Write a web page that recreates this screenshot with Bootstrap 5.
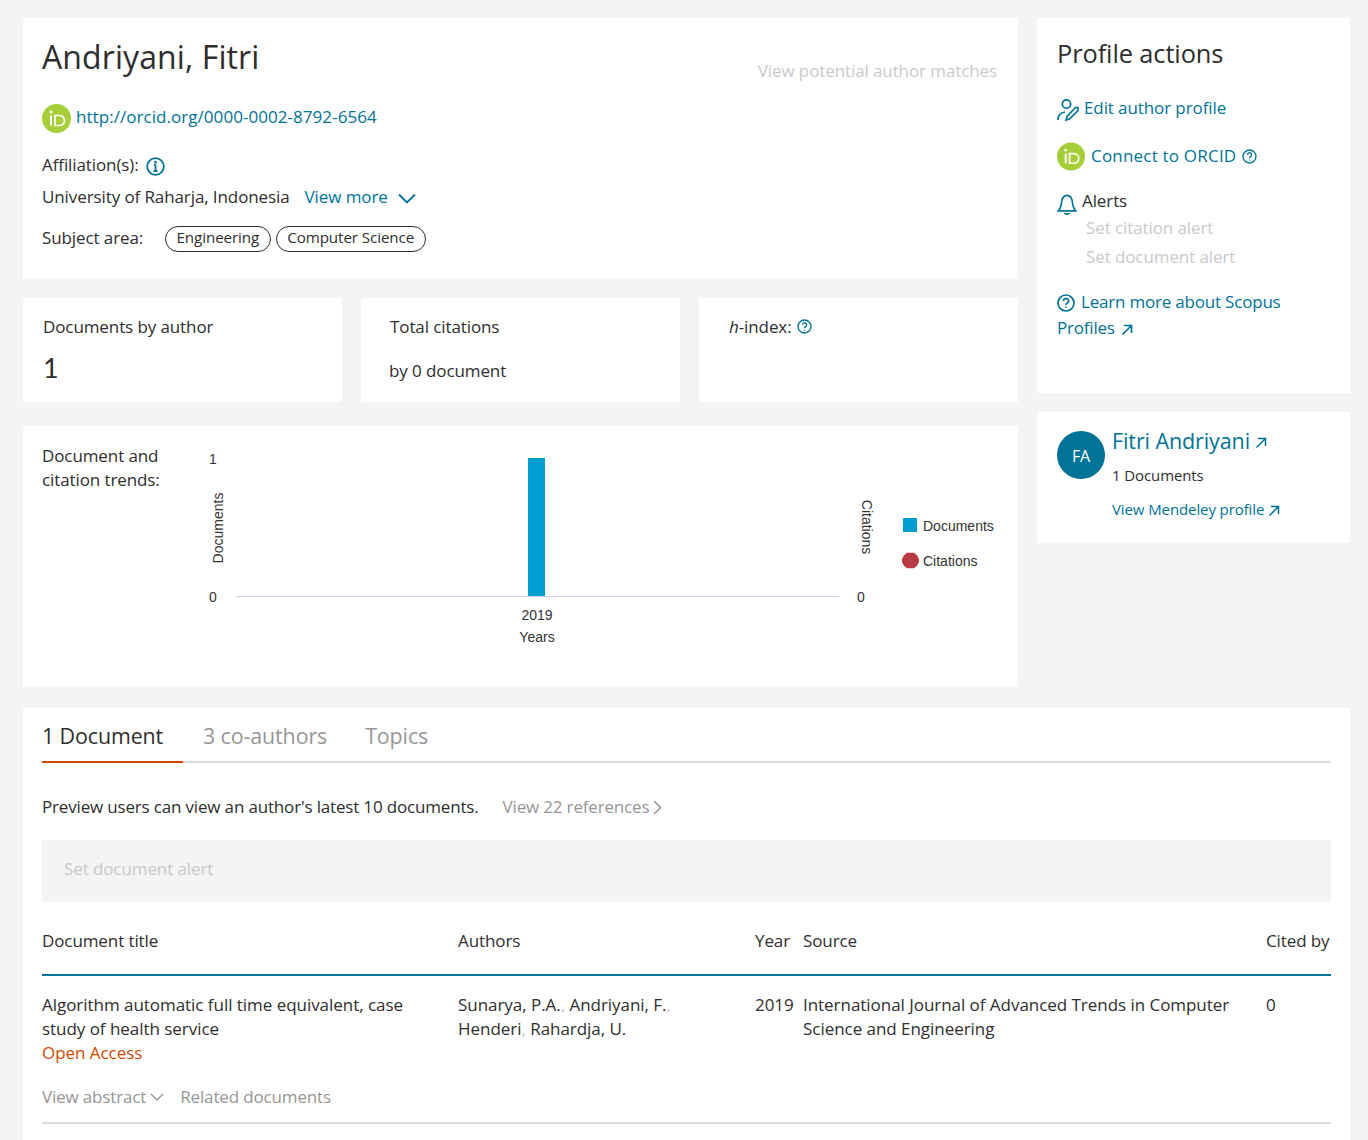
<!DOCTYPE html>
<html lang="en">
<head>
<meta charset="utf-8">
<title>Author details</title>
<link href="https://cdn.jsdelivr.net/npm/bootstrap@5.3.0/dist/css/bootstrap.min.css" rel="stylesheet">
<style>
:root{--ink:#2e2e2e;--teal:#007398;--mute:#969696;--pale:#c9c9c9;}
html,body{height:1140px;overflow:hidden}
body{background:#f4f4f4;color:var(--ink);font-family:"Open Sans","Noto Sans",sans-serif;font-size:17px;line-height:24px;padding:18px 18px 0 23px;letter-spacing:-.1px}
a{color:var(--teal);text-decoration:none}
.page-top{display:flex;gap:19px;align-items:flex-start}
.left-col{width:995px;flex:none}
.right-col{width:313px;flex:none}
.panel{background:#fff}
.author-panel{height:261px;padding:19px 20px 0 19px;position:relative}
.author-name{font-size:32px;line-height:40px;margin:0;font-weight:400;letter-spacing:.1px}
.matches{position:absolute;top:41px;right:21px;color:var(--pale)}
.orcid-line{margin-top:25px;height:30px;display:flex;align-items:center;gap:5px;letter-spacing:.05px}
.orcid-line svg{flex:none;margin-top:2px}
.aff-line{margin-top:21px;height:24px;display:flex;align-items:center;gap:7px}
.aff-line svg{margin-top:2px}
.uni-line{margin-top:8px;height:24px;display:flex;align-items:center}
.uni-line a{margin-left:15px;display:flex;align-items:center;gap:10px}
.uni-line svg{margin-top:2px}
.subject-line{margin-top:17px;height:26px;display:flex;align-items:center}
.subject-line>span:first-child{width:123px;margin-top:-3px}
.pill{border:1px solid #2e2e2e;border-radius:13px;height:26px;line-height:21px;padding:0 10.5px;font-size:15.2px;margin-right:5px}
.stats{display:flex;gap:19px;margin-top:19px}
.stat{flex:none;width:319px;height:104px;padding:17px 20px}
.stat-two{padding-left:29px}
.stat-three{padding-left:30px;display:flex;align-items:flex-start;gap:5px}
.stat-num{font-size:27px;margin-top:15px;line-height:28px;font-family:Lato,sans-serif}
.stat-sub{margin-top:20px;margin-left:-1px}
.chart-panel{height:261px;margin-top:24px;position:relative;padding:18px 19px}
.chart-label{width:140px;line-height:24px}
.chart-svg{position:absolute;left:0;top:0}
.chart-svg text{font-family:"Liberation Sans",Arial,sans-serif;font-size:14px;fill:#333;letter-spacing:0}
.actions{height:375px;padding:15px 20px}
.actions h2{font-size:25.4px;line-height:40px;font-weight:400;margin:0}
.act-row{display:flex;align-items:center}
.act-edit{margin-top:20px;height:30px;gap:5px}
.act-edit svg{margin-top:4px}
.act-orcid{margin-top:18px;height:30px;gap:6px;letter-spacing:.2px}
.act-alert{margin-top:15px;height:30px;gap:5px}
.act-alert svg{margin-top:6px}
.off-link{color:var(--pale);margin-left:29px;height:29px;line-height:29px}
.off-link.first{margin-top:-3px}
.learn{margin-top:18px;line-height:26px;letter-spacing:-.2px}
.learn svg{vertical-align:-4px}
.learn .q-icon{margin-right:6px}
.learn .out-icon{margin-left:2px;vertical-align:-2px}
.mend{height:131px;margin-top:19px;padding:19px 20px;display:flex;gap:7px}
.avatar{width:48px;height:48px;border-radius:50%;background:var(--teal);color:#fff;display:flex;align-items:center;justify-content:center;flex:none;font-size:16px;padding-top:2px}
.mend-name{font-size:21.5px;line-height:24px;margin-top:-2px;display:block}
.mend-docs{font-size:15px;margin-top:10px;margin-bottom:10px;line-height:24px}
.mend a.small-link{font-size:15px}
.docs-panel{margin-top:21px;height:432px;padding:8px 19px;overflow:hidden}
.tab-bar{display:flex;border-bottom:2px solid #dcdcdc;height:47px}
.tab-item{font-size:21.4px;line-height:40px;color:var(--mute);margin-right:38px}
.tab-item.on{color:var(--ink);border-bottom:2px solid #d14900;height:47px;width:141px;margin-right:20px}
.preview{margin-top:32px;display:flex;height:24px;align-items:center;letter-spacing:-.17px}
.preview a{color:var(--mute);margin-left:24px;display:flex;align-items:center;gap:4px}
.alert-strip{background:#f4f4f4;margin-top:21px;height:62px;line-height:58px;padding-left:22px;color:var(--pale)}
.doc-table{table-layout:fixed;width:1289px;margin:0;--bs-table-bg:transparent;--bs-table-color:#2e2e2e}
.doc-table th{font-weight:400;border-bottom:2px solid var(--teal);height:73px;padding:6px 0 0;vertical-align:middle}
.doc-table td{border-bottom:2px solid #dcdcdc;padding:17px 0 13px;vertical-align:top;letter-spacing:-.04px}
.doc-links{color:var(--mute);margin-top:20px;display:flex;align-items:center;letter-spacing:-.15px}
.doc-links span.gap-link{margin-left:16px}
.oa{color:#d14900}
.sep{color:#c9c9c9}
</style>
</head>
<body>
<div class="page-top">
  <div class="left-col">
    <section class="panel author-panel">
      <h1 class="author-name">Andriyani, Fitri</h1>
      <div class="matches">View potential author matches</div>
      <div class="orcid-line">
        <svg width="29" height="29" viewBox="0 0 29 29"><circle cx="14.5" cy="14.5" r="14.5" fill="#a6ce39"/><rect x="8" y="11.5" width="2" height="10" fill="#fff"/><circle cx="9" cy="8" r="1.4" fill="#fff"/><path d="M13 11.5h4.5a5 5 0 0 1 0 10H13z" fill="none" stroke="#fff" stroke-width="1.7"/></svg>
        <a href="#">http://orcid.org/0000-0002-8792-6564</a>
      </div>
      <div class="aff-line">Affiliation(s):
        <svg width="19" height="19" viewBox="0 0 19 19" fill="none" stroke="#007398" stroke-width="1.8"><circle cx="9.5" cy="9.5" r="8.3"/><path d="M9.5 8v6M7.5 14h4M8 8h1.5"/><circle cx="9.5" cy="5.2" r=".6"/></svg>
      </div>
      <div class="uni-line">University of Raharja, Indonesia
        <a href="#">View more <svg width="18" height="11" viewBox="0 0 18 11" fill="none" stroke="#007398" stroke-width="1.8"><path d="M1 1.5l8 8 8-8"/></svg></a>
      </div>
      <div class="subject-line"><span>Subject area:</span><span class="pill">Engineering</span><span class="pill">Computer Science</span></div>
    </section>
    <div class="stats">
      <div class="panel stat"><div>Documents by author</div><div class="stat-num">1</div></div>
      <div class="panel stat stat-two"><div>Total citations</div><div class="stat-sub">by 0 document</div></div>
      <div class="panel stat stat-three"><span><i>h</i>-index:</span>
        <svg class="mt-1" width="15" height="15" viewBox="0 0 15 15" fill="none" stroke="#007398" stroke-width="1.4"><circle cx="7.5" cy="7.5" r="6.5"/><path d="M5.4 5.8a2.1 2.1 0 1 1 3.2 1.8c-.7.4-1.1.8-1.1 1.6"/><path d="M7.5 10.6v1"/></svg>
      </div>
    </div>
    <section class="panel chart-panel">
      <div class="chart-label">Document and citation trends:</div>
      <svg class="chart-svg" width="995" height="261" viewBox="0 0 995 261">
        <path d="M213 170.5H816" stroke="#ccd6eb" stroke-width="1"/>
        <rect x="505" y="32" width="17" height="138" fill="#009ed0"/>
        <text x="190" y="38" text-anchor="middle">1</text>
        <text x="190" y="176" text-anchor="middle">0</text>
        <text x="838" y="176" text-anchor="middle">0</text>
        <text x="514" y="194" text-anchor="middle">2019</text>
        <text x="514" y="216" text-anchor="middle">Years</text>
        <text transform="translate(200 102) rotate(-90)" text-anchor="middle">Documents</text>
        <text transform="translate(839 101) rotate(90)" text-anchor="middle">Citations</text>
        <rect x="880" y="92" width="14" height="14" fill="#009ed0"/>
        <text x="900" y="105">Documents</text>
        <path d="M884 127.2h7l3 2.5 2 3.8v3l-2 3.8-3 2.5h-7l-3-2.500-2-3.800v-3l2-3.800z" fill="#b83a45" transform="translate(0 -.5)"/>
        <text x="900" y="140">Citations</text>
      </svg>
    </section>
  </div>
  <aside class="right-col">
    <section class="panel actions">
      <h2>Profile actions</h2>
      <div class="act-row act-edit">
        <svg width="22" height="22" viewBox="0 0 22 22" fill="none" stroke="#007398" stroke-width="1.7"><circle cx="9.5" cy="5" r="4.2"/><path d="M1 21c0-4.500 2.500-7.500 7-8"/><path d="M9 21l1-3.500 8-8.500a1.800 1.800 0 0 1 3 2.500l-8.500 8.500z"/></svg>
        <a href="#">Edit author profile</a>
      </div>
      <div class="act-row act-orcid">
        <svg width="28" height="29" viewBox="0 0 29 29"><circle cx="14.5" cy="14.5" r="14.5" fill="#a6ce39"/><rect x="8" y="11.5" width="2" height="10" fill="#fff"/><circle cx="9" cy="8" r="1.4" fill="#fff"/><path d="M13 11.5h4.500a5 5 0 0 1 0 10H13z" fill="none" stroke="#fff" stroke-width="1.7"/></svg>
        <a href="#">Connect to ORCID</a>
        <svg width="15" height="15" viewBox="0 0 15 15" fill="none" stroke="#007398" stroke-width="1.4"><circle cx="7.5" cy="7.5" r="6.5"/><path d="M5.4 5.8a2.100 2.100 0 1 1 3.200 1.800c-.7.400-1.100.800-1.100 1.600"/><path d="M7.5 10.600v1"/></svg>
      </div>
      <div class="act-row act-alert">
        <svg width="20" height="21" viewBox="0 0 21 23" fill="none" stroke="#007398" stroke-width="1.8"><path d="M1 18.500h19c-3-3-3-5-3.500-9C16 4 14 1.500 10.500 1.500S5 4 4.500 9.500c-.5 4-.5 6-3.500 9z"/><path d="M7.500 21c1.500 1.300 4.500 1.300 6 0"/></svg>
        <span>Alerts</span>
      </div>
      <div class="off-link first">Set citation alert</div>
      <div class="off-link">Set document alert</div>
      <div class="learn"><svg class="q-icon" width="18" height="18" viewBox="0 0 18 18" fill="none" stroke="#007398" stroke-width="1.7"><circle cx="9" cy="9" r="8"/><path d="M6.500 7a2.500 2.500 0 1 1 3.800 2.100c-.8.500-1.300 1-1.300 2"/><path d="M9 12.500v1.300"/></svg><a href="#">Learn more about Scopus Profiles <svg class="out-icon" width="12" height="12" viewBox="0 0 12 12" fill="none" stroke="#007398" stroke-width="1.7"><path d="M1.500 10.500l9-9M3 1.500h7.500V9"/></svg></a></div>
    </section>
    <section class="panel mend">
      <div class="avatar">FA</div>
      <div>
        <a class="mend-name" href="#">Fitri Andriyani <svg width="12" height="12" viewBox="0 0 12 12" fill="none" stroke="#007398" stroke-width="1.5"><path d="M1.500 10.500l9-9M3 1.500h7.500V9"/></svg></a>
        <div class="mend-docs">1 Documents</div>
        <a class="small-link" href="#">View Mendeley profile <svg width="12" height="12" viewBox="0 0 12 12" fill="none" stroke="#007398" stroke-width="1.5"><path d="M1.500 10.500l9-9M3 1.500h7.500V9"/></svg></a>
      </div>
    </section>
  </aside>
</div>
<section class="panel docs-panel">
  <div class="tab-bar">
    <div class="tab-item on">1 Document</div>
    <div class="tab-item">3 co-authors</div>
    <div class="tab-item">Topics</div>
  </div>
  <div class="preview"><span>Preview users can view an author's latest 10 documents.</span>
    <a href="#">View 22 references <svg width="9" height="15" viewBox="0 0 9 15" fill="none" stroke="#969696" stroke-width="1.5"><path d="M1 1l6.500 6.500L1 14"/></svg></a>
  </div>
  <div class="alert-strip">Set document alert</div>
  <table class="table doc-table">
    <colgroup><col style="width:416px"><col style="width:297px"><col style="width:48px"><col style="width:463px"><col style="width:65px"></colgroup>
    <thead><tr><th>Document title</th><th>Authors</th><th>Year</th><th>Source</th><th>Cited by</th></tr></thead>
    <tbody><tr>
      <td><div class="pe-5">Algorithm automatic full time equivalent, case study of health service</div><div class="oa">Open Access</div>
        <div class="doc-links"><span>View abstract</span><svg class="ms-1" width="14" height="8" viewBox="0 0 14 8" fill="none" stroke="#969696" stroke-width="1.4"><path d="M1 1l6 6 6-6"/></svg><span class="gap-link">Related documents</span></div></td>
      <td><div class="pe-5">Sunarya, P.A.<span class="sep">,</span> Andriyani, F.<span class="sep">,</span> Henderi<span class="sep">,</span> Rahardja, U.</div></td>
      <td>2019</td>
      <td><div class="pe-4">International Journal of Advanced Trends in Computer Science and Engineering</div></td>
      <td>0</td>
    </tr></tbody>
  </table>
</section>
</body>
</html>
